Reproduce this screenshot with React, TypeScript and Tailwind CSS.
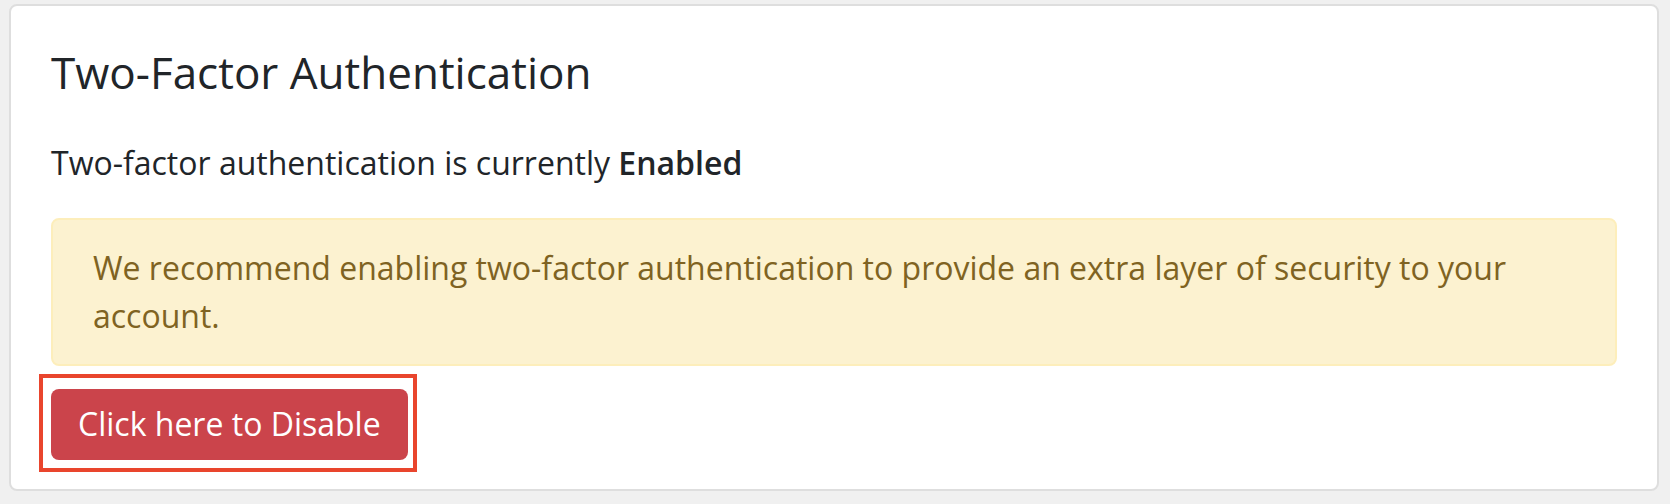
const FONT = "font-['Open_Sans','Noto_Sans',sans-serif]";

export default function App() {
  return (
    <div className={`min-h-[504px] bg-[#f0f0f0] pl-[9px] pr-[11px] pt-[4px] pb-[13px] ${FONT}`}>
      <section className="rounded-[8px] border-2 border-[#dedede] bg-white px-[40px] pt-[40px] pb-[29px] text-[#212529]">
        <h3 className="text-[44px] font-normal leading-[1.2]">Two-Factor Authentication</h3>
        <p className="mt-[40px] text-[32px] leading-[48px]">
          Two-factor authentication is currently <strong className="font-semibold">Enabled</strong>
        </p>
        <div className="mt-[31px] rounded-[8px] border-2 border-[#fdeebb] bg-[#fcf2d0] px-[40px] py-[24px] text-[32px] leading-[48px] text-[#7f6322]">
          We recommend enabling two-factor authentication to provide an extra layer of security to your account.
        </div>
        <div className="relative mt-[23px] w-fit">
          <button className="flex h-[71px] items-center rounded-[8px] bg-[#cb444b] px-[27px] text-[32px] leading-[48px] text-white">
            Click here to Disable
          </button>
          {/* annotation box drawn over the button */}
          <div className="pointer-events-none absolute left-[-12px] top-[-15px] h-[98px] w-[378px] border-4 border-[#e9452d]" />
        </div>
      </section>
    </div>
  );
}
